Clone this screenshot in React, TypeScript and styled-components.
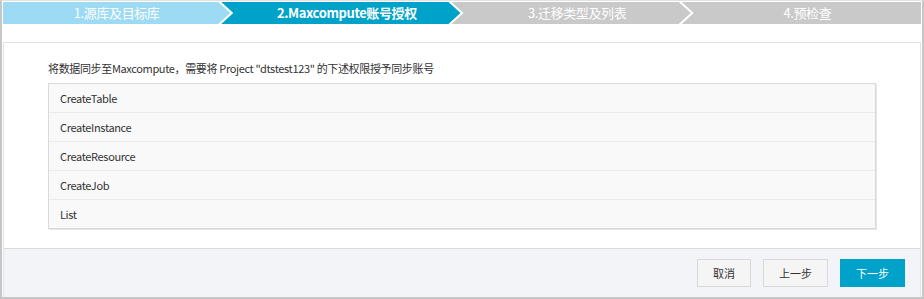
import React from 'react';
import { styled, createGlobalStyle } from 'styled-components';

const GlobalStyle = createGlobalStyle`
  html, body {
    margin: 0;
    padding: 0;
    background: #fff;
  }
  body {
    font-family: "Noto Sans CJK SC", "Liberation Sans", sans-serif;
    font-size: 11px;
    letter-spacing: -0.35px;
    color: #333;
  }
`;

type Tone = 'done' | 'active' | 'todo';
type Pos = 'first' | 'middle' | 'last';

const toneColor: Record<Tone, string> = {
  done: '#9cdbf3',
  active: '#00a2ca',
  todo: '#c9c9c9',
};

const clips: Record<Pos, string> = {
  first: 'polygon(0 0, calc(100% - 12px) 0, 100% 50%, calc(100% - 12px) 100%, 0 100%)',
  middle:
    'polygon(0 0, calc(100% - 12px) 0, 100% 50%, calc(100% - 12px) 100%, 0 100%, 12px 50%)',
  last: 'polygon(0 0, 100% 0, 100% 100%, 0 100%, 12px 50%)',
};

const Frame = styled.div`
  width: 924px;
  height: 299px;
  box-sizing: border-box;
  border-top: 1px solid #e2e2e2;
  border-left: 2px solid #c6c6c6;
  border-right: 2px solid #c6c6c6;
  border-bottom: 2px solid #c6c6c6;
  padding: 1px 1px 0 1px;
  display: flex;
  flex-direction: column;
  gap: 18px;
`;

const StepBar = styled.div`
  display: flex;
  height: 22px;
`;

const Step = styled.div<{ $tone: Tone; $pos: Pos }>`
  flex: 1 1 0;
  height: 22px;
  line-height: 22px;
  text-align: center;
  color: #fff;
  font-size: 13px;
  letter-spacing: -0.4px;
  font-weight: ${(p) => (p.$tone === 'active' ? 700 : 400)};
  background: ${(p) => toneColor[p.$tone]};
  clip-path: ${(p) => clips[p.$pos]};
  padding-left: ${(p) => (p.$pos === 'first' ? '0' : '12px')};
  margin-left: ${(p) => (p.$pos === 'first' ? '0' : '-9px')};
  white-space: nowrap;
`;

const Panel = styled.div`
  flex: 1;
  border: 1px solid #dfe3e6;
  border-bottom: 0;
  display: flex;
  flex-direction: column;
`;

const Body = styled.div`
  flex: 1;
  padding: 15px 44px 18px;
`;

const Intro = styled.div`
  line-height: 20px;
  margin-bottom: 5px;
  color: #333;
`;

const PermTable = styled.div`
  border: 1px solid #d9d9d9;
  box-shadow: 1px 1px 0 #e6e6e6;
  background: #f9f9f9;
`;

const PermRow = styled.div`
  height: 28px;
  line-height: 28px;
  padding-left: 11px;
  color: #333;
  & + & {
    border-top: 1px solid #ebebeb;
  }
`;

const Footer = styled.div`
  height: 48px;
  border-top: 1px solid #dadada;
  background: #f3f4f7;
  display: flex;
  align-items: center;
  justify-content: flex-end;
  gap: 12px;
  padding-right: 15px;
`;

const Button = styled.button<{ $primary?: boolean }>`
  height: 28px;
  min-width: 52px;
  padding: 0 15px;
  font-family: inherit;
  font-size: 11px;
  letter-spacing: 0;
  border: 1px solid ${(p) => (p.$primary ? '#00a2ca' : '#d9d9d9')};
  background: ${(p) => (p.$primary ? '#00a2ca' : '#f5f5f5')};
  color: ${(p) => (p.$primary ? '#fff' : '#333')};
  cursor: pointer;
`;

const steps: { label: string; tone: Tone }[] = [
  { label: '1.源库及目标库', tone: 'done' },
  { label: '2.Maxcompute账号授权', tone: 'active' },
  { label: '3.迁移类型及列表', tone: 'todo' },
  { label: '4.预检查', tone: 'todo' },
];

const permissions = ['CreateTable', 'CreateInstance', 'CreateResource', 'CreateJob', 'List'];

export default function App() {
  return (
    <>
      <GlobalStyle />
      <Frame>
        <StepBar>
          {steps.map((s, i) => (
            <Step
              key={s.label}
              $tone={s.tone}
              $pos={i === 0 ? 'first' : i === steps.length - 1 ? 'last' : 'middle'}
            >
              {s.label}
            </Step>
          ))}
        </StepBar>
        <Panel>
          <Body>
            <Intro>将数据同步至Maxcompute，需要将 Project "dtstest123" 的下述权限授予同步账号</Intro>
            <PermTable>
              {permissions.map((p) => (
                <PermRow key={p}>{p}</PermRow>
              ))}
            </PermTable>
          </Body>
          <Footer>
            <Button>取消</Button>
            <Button>上一步</Button>
            <Button $primary>下一步</Button>
          </Footer>
        </Panel>
      </Frame>
    </>
  );
}
